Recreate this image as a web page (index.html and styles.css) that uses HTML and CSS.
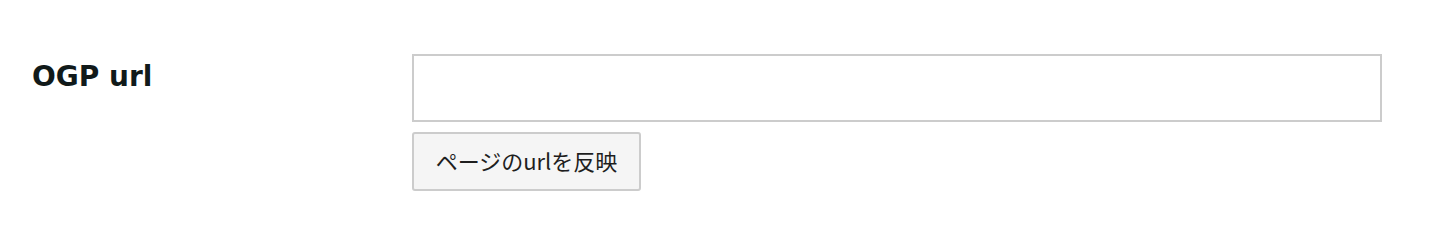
FILE: index.html
```html
<!DOCTYPE html>
<html lang="ja">
<head>
<meta charset="utf-8">
<title>OGP url</title>
<link rel="stylesheet" href="styles.css">
</head>
<body>
<div class="form-row">
  <label class="form-label" for="ogp-url">OGP url</label>
  <div class="form-field">
    <input class="text-input" id="ogp-url" type="text">
    <button class="btn" type="button">ページのurlを反映</button>
  </div>
</div>
</body>
</html>
```

FILE: styles.css
```css
html, body {
  margin: 0;
  padding: 0;
  background: #fff;
}

.form-row {
  display: grid;
  grid-template-columns: 380px 970px;
  padding: 54px 0 0 32px;
}

.form-label {
  font-family: "DejaVu Sans", "Noto Sans CJK JP", sans-serif;
  font-weight: bold;
  font-size: 28px;
  color: #111a1a;
  margin-top: 7px;
  line-height: 1.164;
}

.form-field {
  display: flex;
  flex-direction: column;
  align-items: flex-start;
  gap: 10px;
}

.text-input {
  box-sizing: border-box;
  width: 970px;
  height: 68px;
  margin: 0;
  border: 2px solid #cccccc;
  border-radius: 0;
  background: #fff;
  padding: 0 12px;
  font-size: 20px;
}

.btn {
  box-sizing: border-box;
  width: 229px;
  height: 59px;
  margin: 0;
  border: 2px solid #cccccc;
  border-radius: 3px;
  background: #f5f5f5;
  color: #1e1e1e;
  font-family: "Noto Sans CJK JP", sans-serif;
  font-size: 22px;
  padding: 0 0 3px 0;
  text-align: center;
}
```
